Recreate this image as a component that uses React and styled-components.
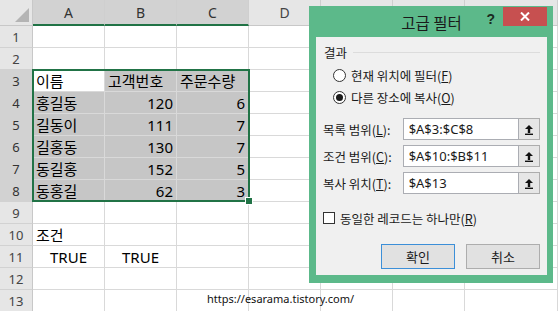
import React from "react";
import styled, { createGlobalStyle, css } from "styled-components";

const GlobalStyle = createGlobalStyle`
  html, body { margin: 0; padding: 0; background: #ffffff; overflow: hidden; }
  body { font-family: "Noto Sans CJK KR", "Noto Sans", sans-serif; }
`;

const GREEN = "#217346";
const GRID = "#d9d9d9";

// 시트 영역
export const Sheet = styled.div`
  position: relative;
  width: 558px;
  height: 311px;
  overflow: hidden;
  display: grid;
  grid-template-columns: 33px repeat(6, 72px) 1fr;
  grid-template-rows: 26px repeat(13, 22px) 1fr;
  background: #fff;
`;

export const Corner = styled.div`
  background: #e6e6e6;
  border-right: 1px solid #c8c8c8;
  border-bottom: 1px solid #c8c8c8;
  box-sizing: border-box;
  position: relative;
  &::after {
    content: "";
    position: absolute;
    right: 3px;
    bottom: 3px;
    border-left: 14px solid transparent;
    border-bottom: 14px solid #b4b4b4;
  }
`;

export const ColHead = styled.div`
  box-sizing: border-box;
  display: flex;
  align-items: center;
  justify-content: center;
  font-family: "Noto Sans", sans-serif;
  font-size: 14px;
  color: #444;
  background: #e6e6e6;
  border-right: 1px solid #cfcfcf;
  border-bottom: 1px solid #c8c8c8;
  ${(p) =>
    p.$on &&
    css`
      background: #d2d2d2;
      color: #333;
      border-bottom: 2px solid ${GREEN};
    `}
`;

export const RowHead = styled.div`
  box-sizing: border-box;
  display: flex;
  align-items: center;
  justify-content: center;
  font-family: "Noto Sans", sans-serif;
  font-size: 13px;
  color: #444;
  background: #e6e6e6;
  border-right: 1px solid #c8c8c8;
  border-bottom: 1px solid #d2d2d2;
  ${(p) =>
    p.$on &&
    css`
      background: #d2d2d2;
      color: #333;
    `}
`;

export const Cell = styled.div`
  box-sizing: border-box;
  display: flex;
  align-items: center;
  padding: 0 3px;
  font-size: 15px;
  color: #000;
  white-space: nowrap;
  border-right: 1px solid ${GRID};
  border-bottom: 1px solid ${GRID};
  justify-content: ${(p) =>
    p.$align === "right" ? "flex-end" : p.$align === "center" ? "center" : "flex-start"};
  background: ${(p) => (p.$sel ? "#c6c6c6" : "#fff")};
  ${(p) => p.$num && css`font-family: "Noto Sans", sans-serif;`}
`;

export const Selection = styled.div`
  position: absolute;
  left: 32px;
  top: 69px;
  width: 218px;
  height: 133px;
  box-sizing: border-box;
  border: 2px solid ${GREEN};
  pointer-events: none;
  &::after {
    content: "";
    position: absolute;
    right: -5px;
    bottom: -5px;
    width: 6px;
    height: 6px;
    background: ${GREEN};
    border: 1px solid #fff;
  }
`;

export const Watermark = styled.div`
  position: absolute;
  left: 207px;
  top: 291px;
  font-family: "Noto Sans", sans-serif;
  font-size: 11px;
  color: #111;
`;

// 고급 필터 대화상자
export const Dialog = styled.div`
  position: absolute;
  left: 309px;
  top: 6px;
  width: 244px;
  height: 277px;
  box-sizing: border-box;
  background: #5cb98a;
  padding: 0 6px 8px 7px;
  display: flex;
  flex-direction: column;
`;

export const TitleBar = styled.div`
  height: 31px;
  position: relative;
  display: flex;
  align-items: center;
  justify-content: center;
`;

export const Title = styled.span`
  font-size: 15.5px;
  color: #1a1a1a;
`;

export const Help = styled.span`
  position: absolute;
  right: 52px;
  top: 5px;
  font-family: "Liberation Sans", sans-serif;
  font-weight: bold;
  font-size: 14px;
  color: #1a2a20;
`;

export const Close = styled.div`
  position: absolute;
  right: 0;
  top: 1px;
  width: 44px;
  height: 19px;
  background: #c75050;
  display: flex;
  align-items: center;
  justify-content: center;
`;

export const Body = styled.div`
  flex: 1;
  background: #f0f0f0;
  padding: 6px 7px 0 7px;
  display: flex;
  flex-direction: column;
  font-size: 12.5px;
  color: #1a1a1a;
`;

export const GroupTitle = styled.div`
  display: flex;
  align-items: center;
  gap: 6px;
  height: 18px;
  padding-left: 1px;
  &::after {
    content: "";
    flex: 1;
    height: 1px;
    background: #dcdcdc;
  }
`;

export const Option = styled.label`
  display: flex;
  align-items: center;
  gap: 5px;
  height: 22px;
  padding-left: 10px;
  margin-top: ${(p) => (p.$first ? "3px" : "0")};
`;

export const Radio = styled.span`
  box-sizing: border-box;
  width: 13px;
  height: 13px;
  border-radius: 50%;
  border: 1px solid #333;
  background: #fff;
  display: flex;
  align-items: center;
  justify-content: center;
  &::after {
    content: "";
    width: 7px;
    height: 7px;
    border-radius: 50%;
    background: ${(p) => (p.$checked ? "#1a1a1a" : "transparent")};
  }
`;

export const Label = styled.span`
  white-space: nowrap;
`;

export const Key = styled.span`
  text-decoration: underline;
`;

export const RangeList = styled.div`
  margin-top: 10px;
  display: flex;
  flex-direction: column;
  gap: 5px;
`;

export const RangeRow = styled.div`
  display: flex;
  align-items: center;
  height: 22px;
`;

export const RangeLabel = styled.span`
  width: 80px;
  white-space: nowrap;
`;

export const RangeInput = styled.div`
  box-sizing: border-box;
  width: 117px;
  height: 22px;
  background: #fff;
  border: 1px solid #abadb3;
  display: flex;
  align-items: center;
  padding-left: 5px;
  font-family: "Noto Sans", sans-serif;
  font-size: 13px;
`;

export const PickBtn = styled.div`
  box-sizing: border-box;
  width: 21px;
  height: 22px;
  background: #e6e6e6;
  border: 1px solid #adadad;
  border-left: none;
  display: flex;
  align-items: center;
  justify-content: center;
`;

export const CheckRow = styled.label`
  display: flex;
  align-items: center;
  gap: 5px;
  margin-top: 15px;
  height: 18px;
`;

export const Box = styled.span`
  box-sizing: border-box;
  width: 12px;
  height: 12px;
  border: 1px solid #333;
  background: #fff;
`;

export const Buttons = styled.div`
  display: flex;
  justify-content: flex-end;
  gap: 11px;
  margin-top: 17px;
`;

export const Button = styled.div`
  box-sizing: border-box;
  width: 74px;
  height: 25px;
  display: flex;
  align-items: center;
  justify-content: center;
  background: #e1e1e1;
  border: 1px solid ${(p) => (p.$primary ? "#3c8fd8" : "#adadad")};
  font-size: 13px;
`;

const Arrow = () => (
  <svg width="10" height="11" viewBox="0 0 10 11">
    <path d="M5 1 L9 5 H6.2 V9 H3.8 V5 H1 Z" fill="#111" />
    <rect x="1" y="9.6" width="8" height="1.4" fill="#111" />
  </svg>
);

// E, F 열 머리글은 대화상자에 가려져 있음
const cols = ["A", "B", "C", "D", "", "", ""];

const rows = {
  3: [["이름", "left"], ["고객번호", "left"], ["주문수량", "left"]],
  4: [["홍길동", "left"], ["120", "right"], ["6", "right"]],
  5: [["길동이", "left"], ["111", "right"], ["7", "right"]],
  6: [["길홍동", "left"], ["130", "right"], ["7", "right"]],
  7: [["동길홍", "left"], ["152", "right"], ["5", "right"]],
  8: [["동홍길", "left"], ["62", "right"], ["3", "right"]],
  10: [["조건", "left"]],
  11: [["TRUE", "center"], ["TRUE", "center"]],
};

const ranges = [
  ["목록 범위", "L", "$A$3:$C$8"],
  ["조건 범위", "C", "$A$10:$B$11"],
  ["복사 위치", "T", "$A$13"],
];

export default function App() {
  const body = [];
  for (let r = 1; r <= 13; r++) {
    const inSel = r >= 3 && r <= 8;
    body.push(
      <RowHead key={"h" + r} $on={inSel}>
        {r}
      </RowHead>
    );
    for (let c = 0; c < 7; c++) {
      const data = rows[r] && rows[r][c];
      const sel = inSel && c < 3 && !(r === 3 && c === 0);
      const num = data && /^[0-9A-Z]+$/.test(data[0]);
      body.push(
        <Cell key={r + "-" + c} $sel={sel} $align={data ? data[1] : "left"} $num={num}>
          {data ? data[0] : ""}
        </Cell>
      );
    }
  }

  return (
    <>
      <GlobalStyle />
      <Sheet>
        <Corner />
        {cols.map((c, i) => (
          <ColHead key={"c" + i} $on={i < 3}>
            {c}
          </ColHead>
        ))}
        {body}
        <Selection />
        <Watermark>https://esarama.tistory.com/</Watermark>

        <Dialog>
          <TitleBar>
            <Title>고급 필터</Title>
            <Help>?</Help>
            <Close>
              <svg width="10" height="9" viewBox="0 0 10 9">
                <path d="M1 0.5 L9 8.5 M9 0.5 L1 8.5" stroke="#fff" strokeWidth="2" />
              </svg>
            </Close>
          </TitleBar>
          <Body>
            <GroupTitle>결과</GroupTitle>
            <Option $first>
              <Radio />
              <Label>
                현재 위치에 필터(<Key>F</Key>)
              </Label>
            </Option>
            <Option>
              <Radio $checked />
              <Label>
                다른 장소에 복사(<Key>O</Key>)
              </Label>
            </Option>
            <RangeList>
              {ranges.map(([name, key, value]) => (
                <RangeRow key={key}>
                  <RangeLabel>
                    {name}(<Key>{key}</Key>):
                  </RangeLabel>
                  <RangeInput>{value}</RangeInput>
                  <PickBtn>
                    <Arrow />
                  </PickBtn>
                </RangeRow>
              ))}
            </RangeList>
            <CheckRow>
              <Box />
              <Label>
                동일한 레코드는 하나만(<Key>R</Key>)
              </Label>
            </CheckRow>
            <Buttons>
              <Button $primary>확인</Button>
              <Button>취소</Button>
            </Buttons>
          </Body>
        </Dialog>
      </Sheet>
    </>
  );
}
